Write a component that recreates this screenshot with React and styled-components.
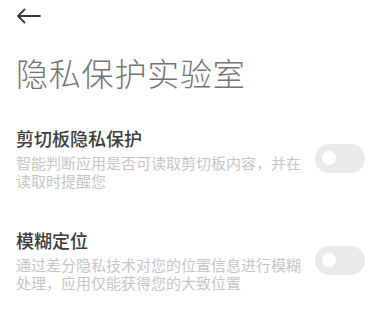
import React from "react";
import styled, { createGlobalStyle } from "styled-components";

const Global = createGlobalStyle`
  html, body { margin: 0; padding: 0; background: #fff; }
  body { font-family: "Noto Sans CJK SC", "Noto Sans", sans-serif; }
`;

const Page = styled.div`
  width: 380px;
  height: 327px;
  background: #fff;
  display: flex;
  flex-direction: column;
  padding: 0 15px 0 16px;
  box-sizing: border-box;
`;

const TopBar = styled.div`
  height: 32px;
  display: flex;
  align-items: center;
`;

const BackButton = styled.button`
  border: 0;
  background: none;
  padding: 0;
  margin: 0;
  width: 26px;
  height: 20px;
  display: flex;
  align-items: center;
  cursor: pointer;
`;

const Title = styled.h1`
  margin: 20px 0 0;
  font-size: 32px;
  line-height: 40px;
  font-weight: 300;
  color: #747474;
  letter-spacing: 0.8px;
`;

const List = styled.div`
  display: flex;
  flex-direction: column;
  margin-top: 34px;
  gap: 38px;
`;

const Row = styled.div`
  display: flex;
  align-items: center;
`;

const TextCol = styled.div`
  flex: 1;
  min-width: 0;
  display: flex;
  flex-direction: column;
`;

const ItemTitle = styled.div`
  font-size: 18px;
  line-height: 24px;
  font-weight: 500;
  color: #3c3c3c;
`;

const ItemDesc = styled.div`
  margin-top: 4px;
  font-size: 15px;
  line-height: 18px;
  color: #c6c6c6;
`;

const Toggle = styled.div`
  flex: none;
  margin-left: 10px;
  width: 50px;
  height: 29px;
  border-radius: 15px;
  background: #e9e9e9;
  position: relative;
`;

const Knob = styled.span`
  position: absolute;
  left: 7px;
  top: 7.5px;
  width: 14px;
  height: 14px;
  border-radius: 50%;
  background: #fff;
`;

const items = [
  {
    title: "剪切板隐私保护",
    desc: "智能判断应用是否可读取剪切板内容，并在读取时提醒您",
  },
  {
    title: "模糊定位",
    desc: "通过差分隐私技术对您的位置信息进行模糊处理，应用仅能获得您的大致位置",
  },
];

export default function App() {
  return (
    <>
      <Global />
      <Page>
        <TopBar>
          <BackButton aria-label="back">
            <svg width="25" height="16" viewBox="0 0 25 16">
              <path
                d="M24 8H2M8.5 1.5L2 8l6.5 6.5"
                fill="none"
                stroke="#3a3a3a"
                strokeWidth="1.8"
                strokeLinecap="round"
                strokeLinejoin="round"
              />
            </svg>
          </BackButton>
        </TopBar>
        <Title>隐私保护实验室</Title>
        <List>
          {items.map((it) => (
            <Row key={it.title}>
              <TextCol>
                <ItemTitle>{it.title}</ItemTitle>
                <ItemDesc>{it.desc}</ItemDesc>
              </TextCol>
              <Toggle>
                <Knob />
              </Toggle>
            </Row>
          ))}
        </List>
      </Page>
    </>
  );
}
